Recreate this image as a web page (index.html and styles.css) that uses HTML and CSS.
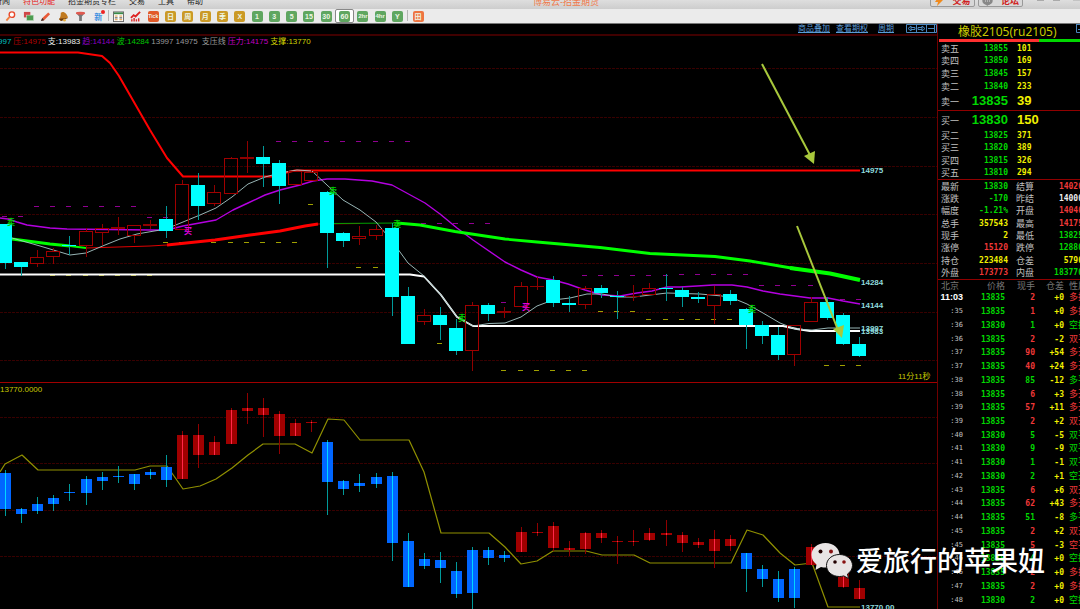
FILE: index.html
```html
<!DOCTYPE html>
<html lang="zh-CN">
<head>
<meta charset="utf-8">
<title>博易云-招金期货</title>
<link rel="stylesheet" href="styles.css">
</head>
<body>
<header>
  <div class="menubar">
    <nav class="menu">
      <a href="#">新闻</a><a href="#" class="hot">特色功能</a><a href="#">招金期货专栏</a><a href="#">交易</a><a href="#">工具</a><a href="#">帮助</a>
    </nav>
    <span class="apptitle">博易云-招金期货</span>
    <div class="actions">
      <button class="action"><svg width="10" height="10" viewBox="0 0 10 10"><path d="M5 0 1 6h3L3 10 9 4H5.500L7 0z" fill="#f08a1c"/></svg>交易</button>
      <button class="action"><svg width="11" height="10" viewBox="0 0 11 10"><ellipse cx="5.500" cy="5" rx="5.200" ry="4" fill="#888"/><path d="M4 8l1 2 3-2z" fill="#888"/><path d="M3 5h1M5 5h1M7 5h1" stroke="#ddd"/></svg>论坛</button>
      <svg class="winctl" width="54" height="12" viewBox="0 0 54 12"><path d="M11 5h7M27 5h7M47 4.500h7" stroke="#aaa" stroke-width="2"/></svg>
    </div>
  </div>
  <div class="toolbar">
    <div class="group tools">
      <button aria-label="搜索"><svg viewBox="0 0 12 12"><circle cx="7.500" cy="4" r="3" fill="#fff" stroke="#e8472a" stroke-width="1.500"/><path d="M5 6.500 1.500 10.500" stroke="#f08040" stroke-width="2"/></svg></button>
      <button aria-label="窗口"><svg viewBox="0 0 12 12"><rect x="1" y="1" width="7" height="6" fill="#d04848"/><rect x="4" y="4.500" width="7.500" height="6" fill="#4c9c50" stroke="#cde0cd" stroke-width=".6"/></svg></button>
      <button aria-label="画线"><svg viewBox="0 0 12 12"><path d="M1 11 2.500 7.500 9 1.500l2 2L4.500 10z" fill="#e85a38"/><path d="M1 11l1.500-3.500L4.500 10z" fill="#333"/></svg></button>
      <button aria-label="预警"><svg viewBox="0 0 12 12"><path d="M5 1c3 0 5 3 6 6L3 11 1 9C3 7 3 4 3 2z" fill="#c07a20"/><path d="M1 8.500 11 7.500 3.500 11z" fill="#6b3a10"/><circle cx="7" cy="10" r="1.500" fill="#e9b040"/></svg></button>
      <button aria-label="筛选"><svg viewBox="0 0 12 12"><path d="M1 2h10L7.500 6v5h-3V6z" fill="#777"/><ellipse cx="6" cy="2.500" rx="5" ry="1.600" fill="#e05a50"/></svg></button>
      <button aria-label="新功能" class="new">新<i></i></button>
    </div>
    <span class="sep"></span>
    <div class="group periods">
      <button aria-label="报价表"><svg viewBox="0 0 12 12"><rect x=".5" y="1" width="11" height="10.500" fill="#fff" stroke="#666"/><path d="M1 2.500h10" stroke="#3a8a4a" stroke-width="2"/><path d="M2 5.500h3M7 5.500h3M2 9.500h3M7 9.500h3" stroke="#e09030"/><path d="M2 7.500h3M7 7.500h3" stroke="#333"/></svg></button>
      <button aria-label="走势图"><svg viewBox="0 0 12 12"><path d="M1 7.500 4 4.500 6 6l5-5" fill="none" stroke="#d22" stroke-width="2"/><path d="M2 9v2.500M4.500 7.500v4M7 9v2.500M9.500 8v3.500" stroke="#d22" stroke-width="1.500"/></svg></button>
      <button><b class="tile red">Tick</b></button>
      <button><b class="tile gold">日</b></button>
      <button><b class="tile gold">周</b></button>
      <button><b class="tile gold">月</b></button>
      <button><b class="tile gold">季</b></button>
      <button><b class="tile gold">X</b></button>
      <button><b class="tile">1</b></button>
      <button><b class="tile">3</b></button>
      <button><b class="tile">5</b></button>
      <button><b class="tile">15</b></button>
      <button><b class="tile">30</b></button>
      <button class="on"><b class="tile">60</b></button>
      <button><b class="tile small">2hr</b></button>
      <button><b class="tile small">4hr</b></button>
      <button><b class="tile">Y</b></button>
    </div>
    <span class="sep"></span>
    <div class="group last"><button><b class="tile orange">田</b></button></div>
  </div>
</header>
<main>
  <section class="charts">
    <div class="links">
      <a href="#">商品叠加</a><a href="#">查看期权</a><a href="#" class="cycle">周期</a>
      <svg width="31" height="10" viewBox="0 0 31 10"><g fill="none" stroke="#4b86bd"><path d="M.5.500h30v8H.5zM10.500.5v8M20.500.5v8M2 4.500l3-2.500v5zM5 3.500h4v2H5M19 4.500 16 2v5zM16 3.500h-4v2h4M28.500 1v7M22 4.500h6"/></g></svg>
    </div>
    <div class="legend">
      <span class="c1">997</span><span class="c2">压:14975</span><span class="c3">支:13983</span><span class="c4">趋:14144</span><span class="c5">波:14284</span><span class="c6">13997</span><span class="c6">14975</span><span class="c6 line">支压线</span><span class="c7">压力:14175</span><span class="c8">支撑:13770</span>
    </div>
    <svg id="price" class="chart" viewBox="0 47 937 335" role="img" aria-label="K线图"></svg>
    <svg id="sub" class="chart sub" viewBox="0 383 937 226" role="img" aria-label="副图"></svg>
  </section>
  <aside>
    <h1>橡胶2105(ru2105)</h1>
    <svg class="corner" width="6" height="10" viewBox="0 0 6 10"><path d="M2 .5H6M2.500 0v8.500H6M4 5.500h2" fill="none" stroke="#4b86bd"/></svg>
    <div class="ratio"><span></span></div>
    <table class="book" id="asks"></table>
    <table class="book" id="bids"></table>
    <table class="stats" id="stats"></table>
    <table class="ticks" id="ticks"><thead><tr><th>北京</th><th>价格</th><th>现手</th><th>仓差</th><th>性质</th></tr></thead></table>
  </aside>
</main>
<div class="watermark">
  <svg width="42" height="37" viewBox="0 0 42 37"><path d="M14.500 1C6.500 1 .5 6.300.5 13c0 4 2 7.200 5 9.500L4.500 28l5.500-3c1.500.4 3 .6 4.500.6C22.500 25.600 28.500 20 28.500 13S22.500 1 14.500 1z" fill="#e8e4e4"/><circle cx="9.500" cy="9.500" r="2" fill="#200"/><circle cx="20" cy="9.500" r="2" fill="#811"/><path d="M28.500 12.500C21 12.500 15.500 17.300 15.500 23.500s5.500 11 13 11c1.500 0 3-.2 4.300-.6l4.700 2.600-1-4.500c3-2 5-5 5-8.500 0-6.200-5.800-11-13-11z" fill="#e8e4e4" stroke="#111"/><circle cx="24" cy="20" r="1.800" fill="#200"/><circle cx="33" cy="20" r="1.800" fill="#811"/></svg>
  <span>爱旅行的苹果妞</span>
</div>
<script src="app.js"></script>
</body>
</html>
```
FILE: styles.css
```css
* { box-sizing: border-box; }
body {
  margin: 0;
  min-height: 100vh;
  position: relative;
  overflow: hidden;
  background: #000;
  color: #c0c0c0;
  font-family: "Liberation Sans", "Noto Sans CJK SC", sans-serif;
  font-size: 8px;
}
button { border: 0; padding: 0; background: none; font: inherit; }
a { color: inherit; text-decoration: none; }
svg { display: block; }

.menubar {
  display: flex;
  align-items: flex-start;
  height: 9px;
  overflow: hidden;
  background: linear-gradient(#dedede, #cdcdcd);
  line-height: 12px;
}
.menu { display: flex; gap: 13px; margin: -4px 0 0 -6px; color: #222; white-space: nowrap; }
.menu .hot { color: #e62020; }
.apptitle { margin: -4px 0 0 330px; color: #f0794a; font-size: 9px; white-space: nowrap; }
.actions { display: flex; gap: 3px; margin-left: auto; }
.action {
  display: flex;
  align-items: center;
  justify-content: center;
  gap: 8px;
  width: 45px;
  height: 12px;
  margin-top: -5px;
  border: 1px solid #999;
  border-radius: 2px;
  background: #d8d8d8;
  color: #d02020;
  font-size: 9px;
  font-weight: bold;
}
.winctl { margin-top: -5px; }

.toolbar {
  display: flex;
  align-items: stretch;
  height: 15px;
  padding-left: 2px;
  background: #ebebeb;
  border-bottom: 1px solid #777;
}
.group { display: flex; }
.group button { flex: 1; display: flex; align-items: center; justify-content: center; }
.group svg { width: 11px; height: 11px; }
.tools { width: 105px; }
.periods { width: 296px; }
.last { width: 18px; }
.sep { width: 1px; height: 11px; margin: 1px 1px 0; background: #b5b5b5; }
.new { position: relative; color: #3c8fe0; font-weight: bold; }
.new i { position: absolute; top: 1px; right: 2px; width: 4px; height: 4px; border-radius: 2px; background: #e22; }
.group .on { background: #fff; border: 1px solid #888; border-radius: 2px; }
.tile {
  width: 11px;
  height: 11px;
  border-radius: 2px;
  background: #5fa660;
  color: #eef6e6;
  font-size: 7px;
  line-height: 11px;
  text-align: center;
  overflow: hidden;
}
.tile.red { background: #e25a28; font-size: 5px; }
.tile.gold { background: #cb9a26; }
.tile.orange { background: #ee7440; }
.tile.small { font-size: 6px; }

main { display: flex; }
.charts { flex: 1; min-width: 0; }
.links {
  display: flex;
  justify-content: flex-end;
  align-items: center;
  gap: 6px;
  height: 12px;
  border-bottom: 2px solid #400000;
  color: #5b9bd5;
}
.links a { text-decoration: underline; line-height: 10px; }
.links .cycle { margin: 0 6px 0 4px; }
.legend {
  display: flex;
  gap: 2px;
  height: 11px;
  line-height: 11px;
  white-space: nowrap;
  margin-left: -2px;
}
.c1 { color: #00c0c0; } .c2 { color: #b00000; } .c3 { color: #eee; } .c4 { color: #8c00c0; }
.c5 { color: #00c800; } .c6 { color: #999; } .c7 { color: #c000c0; } .c8 { color: #d0d000; }
.line { margin-left: 2px; }
.chart { width: 100%; height: auto; }
.sub { border-top: 1px solid #a00000; }

.grid { stroke: #380000; stroke-dasharray: 3 1; shape-rendering: crispEdges; }
.candles { shape-rendering: crispEdges; }
.ln { fill: none; stroke-linejoin: round; }
.tag { font-size: 8px; font-weight: bold; fill: #8fdcdc; }
.note { font-size: 8px; fill: #c8c800; }
.mark { font-size: 8px; font-weight: bold; }

aside {
  flex: 0 0 143px;
  position: relative;
  overflow: hidden;
  border-left: 1px solid #700000;
}
h1 {
  margin: 0;
  height: 15px;
  line-height: 15px;
  padding-left: 20px;
  color: #c8c800;
  font-family: "Noto Sans", "Noto Sans CJK SC", sans-serif;
  font-size: 12px;
  font-weight: normal;
}
.corner { position: absolute; top: 0; right: 0; }
.ratio { height: 3px; margin-left: 1px; background: #00d800; }
.ratio span { display: block; width: 71%; height: 3px; background: #ff3030; }
table { width: 160px; border-collapse: collapse; table-layout: fixed; }
td, th { padding: 0; font-weight: normal; line-height: 11px; white-space: nowrap; text-align: right; vertical-align: middle; }
td { font-family: "DejaVu Sans Mono", "Noto Sans CJK SC", monospace; font-weight: bold; font-size: 8px; }
th { font-family: "Noto Sans CJK SC", sans-serif; font-size: 9px; }
.book, .stats { border-bottom: 1px solid #900000; }
.book { height: 69px; }
.book th, .stats th { text-align: left; padding-left: 3px; }
.book td + td { text-align: left; padding-left: 9px; }
.book .best { height: 18px; }
.book .best td { font-family: "Liberation Sans", sans-serif; font-size: 13px; line-height: 16px; }
.book th { width: 22px; } .book th + td { width: 48px; }
.stats { width: 145px; height: 100px; }
.stats th { width: 22px; }
.stats th:first-child + td { width: 48px; }
.stats td + th { width: 30px; padding-left: 8px; }
.ticks { height: 327px; }
.ticks th { color: #777; }
.ticks th:first-child { width: 25px; text-align: left; padding-left: 3px; }
.ticks th:nth-child(2) { width: 42px; }
.ticks th:nth-child(3) { width: 30px; }
.ticks th:nth-child(4) { width: 29px; }
.ticks td:last-child, .ticks th:last-child { text-align: left; padding-left: 5px; }
.ticks td:last-child { font-weight: normal; font-size: 9px; }
.ticks .sec { font-weight: normal; font-size: 7px; }
.ticks .min { color: #fff; font-family: "Liberation Sans", sans-serif; font-size: 9px; }
.g { color: #00d800; } .r { color: #f03838; } .y { color: #f0f000; } .w { color: #eee; }

.watermark {
  position: absolute;
  right: 35px;
  top: 541px;
  display: flex;
  align-items: center;
  gap: 3px;
  color: #fff;
  font-family: "Noto Sans CJK SC", sans-serif;
  font-size: 27px;
  font-weight: 500;
  line-height: 38px;
  white-space: nowrap;
}
```
FILE: app.js
```js
const X = i => Math.round(5 + 16.11 * i);
const rect = (x, y, w, h, fill, extra = '') => `<rect x="${x}" y="${y}" width="${w}" height="${h}" fill="${fill}" ${extra}/>`;
const line = (pts, color, w) => `<polyline class="ln" points="${pts}" stroke="${color}" stroke-width="${w}"/>`;
const grid = ys => ys.map(y => `<path class="grid" d="M0 ${y}.5H937"/>`).join('');

// direction (u/d), high, body top, body bottom, low
const price = `d 224 224 263 269|d 262 262 267 276|u 250 257 264 267|u 248 251 257 264|d 236 245 246 255|u 228 231 246 257|u 224 228 233 245|u 217 227 229 235|u 225 225 236 243|u 220 224 226 229|d 206 219 231 238|u 180 184 230 230|d 173 185 206 220|u 185 192 204 206|u 157 158 194 194|u 141 157 159 173|d 146 157 164 187|d 160 163 186 204|u 171 171 185 185|u 170 172 181 181|d 191 192 233 268|d 232 233 241 247|u 226 236 239 245|u 225 229 236 240|d 223 228 297 316|d 287 296 344 344|u 309 315 322 325|d 307 315 325 340|d 319 328 351 355|u 302 305 351 371|d 303 305 314 321|u 307 311 313 318|u 282 286 307 307|u 277 286 287 290|d 276 280 303 307|d 296 303 305 312|u 286 288 305 309|d 285 288 293 298|d 291 296 297 319|u 285 296 297 301|u 283 288 295 295|d 274 288 289 301|d 287 290 297 307|d 292 297 299 303|u 286 294 306 324|d 290 294 301 305|d 308 309 325 349|d 321 325 336 344|d 327 335 355 360|u 325 325 355 366|u 297 302 322 322|d 297 302 318 320|d 313 315 344 345|d 337 344 356 357`;
const sub = `d 470 473 509 516|d 508 509 514 523|d 497 504 511 514|d 495 498 504 511|d 484 492 493 501|d 476 479 493 505|d 472 477 481 490|d 466 476 477 483|d 474 474 484 490|d 469 472 475 479|d 455 467 480 487|u 431 435 479 479|u 424 435 455 468|u 436 442 455 455|u 408 410 444 444|u 393 408 411 424|u 398 408 415 437|u 411 414 436 454|u 419 423 436 436|u 420 422 423 432|d 440 442 482 515|d 480 481 489 495|d 474 483 486 492|d 473 477 484 488|d 472 476 543 561|d 533 541 587 587|d 553 559 566 569|d 552 560 568 583|d 562 571 594 598|d 547 550 593 609|d 547 550 558 565|d 551 555 558 562|u 527 532 552 552|u 523 532 533 536|u 522 526 548 551|u 541 548 550 556|u 532 533 549 554|u 530 533 538 543|u 536 541 542 564|u 530 541 542 546|u 528 533 540 541|u 520 533 535 546|u 532 535 543 552|u 538 542 545 548|u 530 539 551 568|u 535 539 546 551|d 553 553 569 592|d 565 569 579 587|d 571 579 598 602|d 567 569 598 608|u 544 547 565 565|u 547 547 563 563|u 559 559 587 588|u 580 588 599 599`;
const parse = s => s.split('|').map(r => { const [d, ...n] = r.split(' '); return [d, ...n.map(Number)]; });

const priceCandles = parse(price).map(([d, h, t, b, l], i) => {
  const x = X(i);
  if (d === 'd') return rect(x, h, 1, l - h, '#009a9a') + rect(x - 7, t, 14, b - t, '#00ffff');
  return rect(x, h, 1, t - h, '#900000') + rect(x, b, 1, l - b, '#900000') +
    (b - t < 3 ? rect(x - 7, t, 14, b - t, '#900000') : rect(x - 6.5, t + .5, 13, b - t - 1, 'none', 'stroke="#a00000"'));
}).join('');
const subCandles = parse(sub).map(([d, h, t, b, l], i) => {
  const x = X(i), c = d === 'd' ? ['#009a9a', '#0066ff', '#00d8ff'] : ['#900000', '#a00000', '#ff2848'];
  return rect(x, h, 1, l - h, c[0]) + rect(x - 5, t, 11, b - t, c[1]) + rect(x, t, 1, b - t, c[2]);
}).join('');

// y, first candle, last candle
const dashes = (list, color) => list.map(([y, a, b]) => {
  let s = '';
  for (let i = a; i <= b; i++) s += rect(X(i) - 3, y, 5, 1, color);
  return s;
}).join('');
const marks = (list, ch, color) => list.map(([x, y]) => `<text class="mark" x="${x}" y="${y + 3}" text-anchor="middle" fill="${color}">${ch}</text>`).join('');
const arrow = (x1, y1, x2, y2, head) => `<path d="M${x1} ${y1}L${x2} ${y2}" stroke="#a8c83c" stroke-width="2"/><path d="${head}" fill="#a8c83c"/>`;
const tag = (y, t) => `<text class="tag" x="861" y="${y + 3}">${t}</text>`;

document.getElementById('price').innerHTML =
  grid([68, 117, 166, 214, 263, 312, 360]) +
  `<g class="candles">${dashes([[206, 2, 8], [216, 0, 1], [217, 9, 10], [141, 17, 25], [223, 26, 30], [302, 31, 31], [275, 36, 41], [274, 42, 46], [285, 47, 50], [299, 52, 53]], '#900090')}${dashes([[275, 3, 9], [242, 10, 18], [204, 19, 19], [267, 22, 23], [343, 27, 27], [370, 31, 36], [311, 37, 39], [319, 40, 45], [365, 51, 53]], '#a0a000')}</g>` +
  line('0,274.5 410,274.5 424,276.5 441,295 457,317 473,326 783,326 797,329 810,331 860,331', '#fff', 1.8) +
  line('0,52.500 78,52.500 102,56 110,63 119,76 150,130 167,158 183,176.500 275,176.500 284,173 295,170.500 860,170.500', '#f00', 2) +
  line('0,218 8,219 17,222 27,225 50,228 67,229 150,230 167,230 183,226 216,220 233,210 248,203 265,195 280,190 300,185 313,181 327,179 345,179 372,181 392,185 425,203 440,214 457,228 473,240 505,262 521,270 537,277 553,280 568,284 585,290 602,295 620,296 637,293 652,291 667,287 680,287 697,286 713,285 732,285 747,287 763,291 780,294 795,296 810,298 828,298 843,301 860,304', '#b400e0', 1.4) +
  line('0,237 12,239 50,244 70,246', '#00ff00', 3) + line('70,246 86,248', '#00ff00', 2) +
  line('86,248 150,246 167,245', '#e00000', 1) + line('167,245 215,240 250,235 280,231 305,226 318,224', '#ff0000', 3) +
  line('318,224 360,223.500', '#c00000', 1) + line('330,223.500 400,223', '#00a000', 1) +
  line('397,223 420,225 455,231.5 505,239 537,242 600,247.500 650,253.500 715,256.500 750,261 797,269', '#00ff00', 2.8) +
  line('790,268 830,273.500 860,280', '#00ff00', 4) +
  line('12,238 40,246 70,255 86,253 105,245 120,239 137,234 166,229 183,222 200,215 216,208 232,197 248,184 265,177 280,173 297,170 312,171 327,185 343,200 360,210 376,222 392,241 408,263 424,276 441,295 457,317 473,326 489,323.500 505,323 521,317 537,306 553,300 570,298 587,294 602,294 618,297 634,297 650,295 667,293 700,294 722,296 735,299 747,304 763,313 780,323 795,329 812,330 828,328 860,328', '#a8c8c8', .9) +
  `<g class="candles">${priceCandles}</g>` +
  marks([[11, 222], [333, 191], [397, 224], [462, 318], [752, 309]], '卖', '#00d000') + marks([[188, 231], [526, 307]], '买', '#e000e0') +
  tag(170, '14975') + tag(282, '14284') + tag(305, '14144') + tag(328, '13997') + tag(331, '13983') +
  arrow(762, 64, 810, 155, 'M814 164 804 156 815 151z') + arrow(797, 226, 838, 330, 'M842 338 833 329 844 325z') +
  '<text class="note" x="898" y="379">11分11秒</text>';

document.getElementById('sub').innerHTML =
  grid([417, 463, 510, 556]) +
  line('0,472 5,464 22,455 38,470 135,470 150,466 167,466 183,489 200,486 216,479 232,468 248,455 263,444 295,444 312,453 328,419 344,420 360,440 409,440 424,472 441,533 489,533 505,547 521,564 537,561 553,551 586,551 602,555 634,555 650,563 731,563 747,530 763,535 780,553 795,565 812,563 828,607 860,607', '#909000', 1.2) +
  `<g class="candles">${subCandles}</g>` +
  '<text class="note" x="0" y="392">13770.0000</text><text class="tag" x="861" y="610">13770.00</text>';

const cell = (v, c) => `<td class="${c}">${v}</td>`;
const book = (rows, best) => rows.map(([n, p, v], i) => `<tr class="${i === best ? 'best' : ''}"><th>${n}</th>${cell(p, 'g')}${cell(v, 'y')}</tr>`).join('');
document.getElementById('asks').innerHTML = book([['卖五', 13855, 101], ['卖四', 13850, 169], ['卖三', 13845, 157], ['卖二', 13840, 233], ['卖一', 13835, 39]], 4);
document.getElementById('bids').innerHTML = book([['买一', 13830, 150], ['买二', 13825, 371], ['买三', 13820, 389], ['买四', 13815, 326], ['买五', 13810, 294]], 0);
document.getElementById('stats').innerHTML = [
  ['最新', 13830, 'g', '结算', 14020, 'r'], ['涨跌', -170, 'g', '昨结', 14000, 'w'], ['幅度', '-1.21%', 'g', '开盘', 14040, 'r'],
  ['总手', 357543, 'y', '最高', 14175, 'r'], ['现手', 2, 'y', '最低', 13825, 'g'], ['涨停', 15120, 'r', '跌停', 12880, 'g'],
  ['持仓', 223484, 'y', '仓差', 5790, 'y'], ['外盘', 173773, 'r', '内盘', 183770, 'g']
].map(r => `<tr><th>${r[0]}</th>${cell(r[1], r[2])}<th>${r[3]}</th>${cell(r[4], r[5])}</tr>`).join('');

const ticks = `11:03 13835 2 +0 多换 r|:35 13835 1 +0 多换 r|:36 13830 1 +0 空换 g|:36 13835 2 -2 双平 r|:37 13835 90 +54 多开 r|:37 13835 40 +24 多开 r|:38 13835 85 -12 多平 g|:38 13835 6 +3 多开 r|:39 13835 57 +11 多开 r|:39 13835 2 +2 双开 r|:40 13830 5 -5 双平 g|:41 13830 9 -9 双平 g|:41 13830 1 -1 双平 g|:42 13830 2 +1 空开 g|:43 13835 6 +6 双开 r|:44 13835 62 +43 多开 r|:44 13835 51 -8 多平 g|:45 13835 2 +2 双开 r|:45 13835 5 -3 空平 r|:46 13830 4 +0 空换 g|:46 13835 2 +0 多换 r|:47 13835 2 +0 多换 r|:48 13830 2 +0 空换 g`;
document.getElementById('ticks').insertAdjacentHTML('beforeend', '<tbody>' + ticks.split('|').map((s, i) => {
  const [t, p, n, d, k, c] = s.split(' ');
  return `<tr>${cell(t, i ? 'sec' : 'min')}${cell(p, 'g')}${cell(n, c)}${cell(d, 'y')}${cell(k, c)}</tr>`;
}).join('') + '</tbody>');
```
